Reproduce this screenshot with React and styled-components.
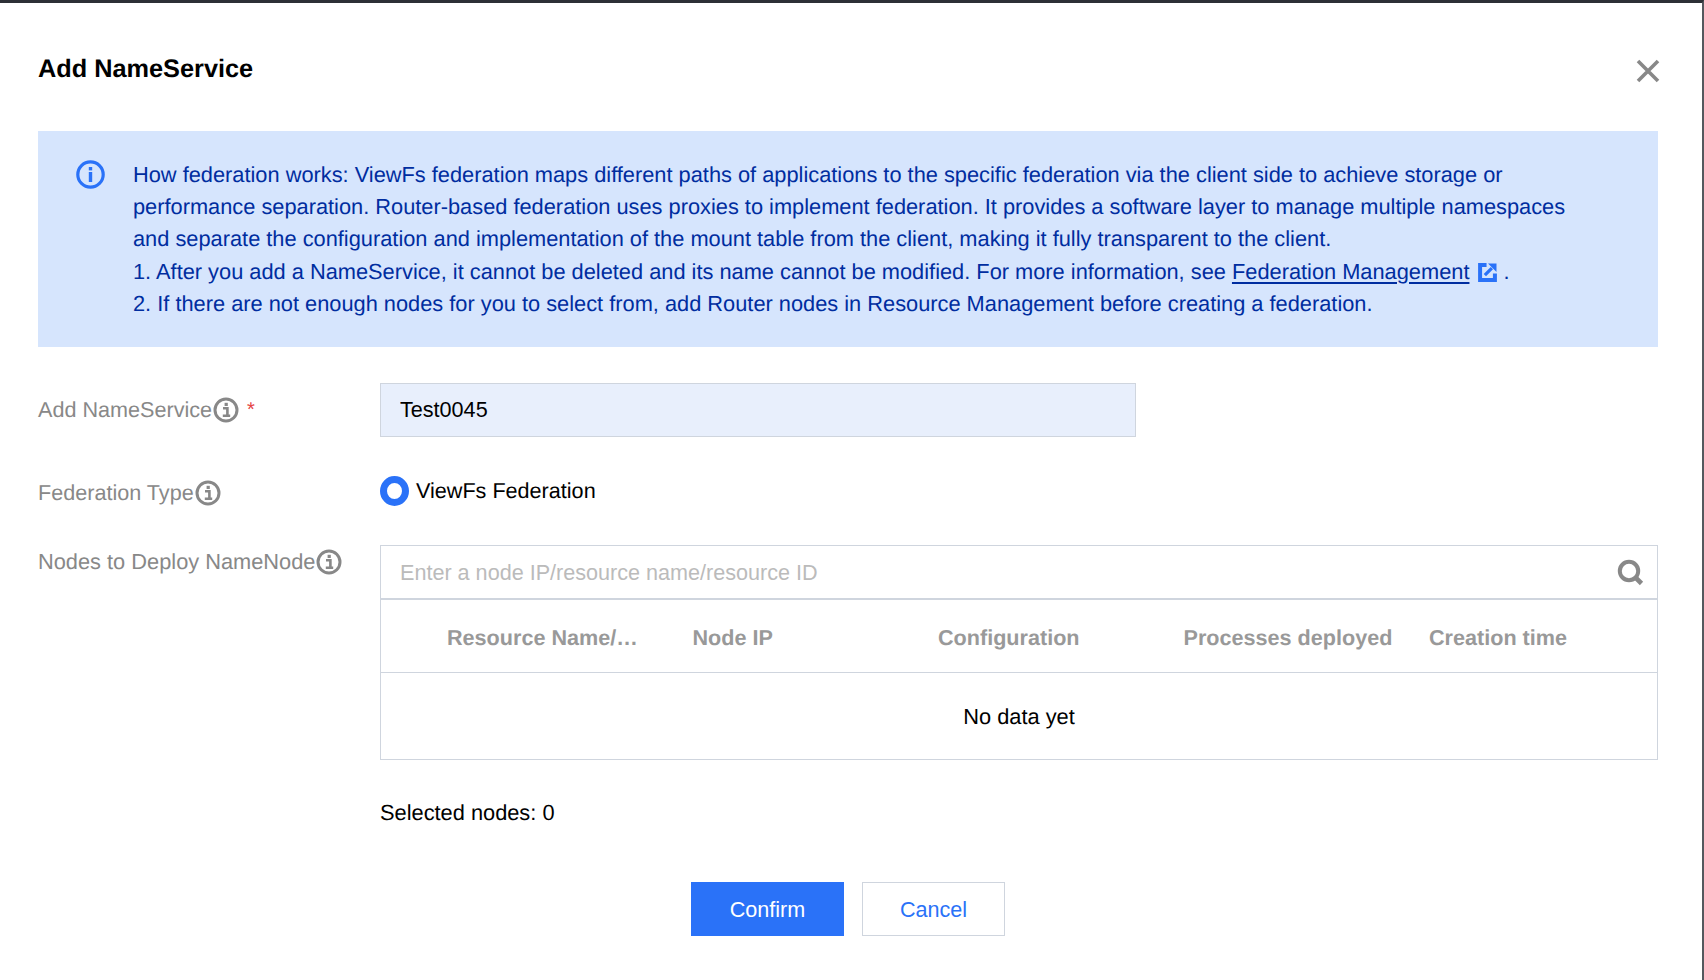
import React from 'react'
import styled, { createGlobalStyle } from 'styled-components'

const GlobalStyle = createGlobalStyle`
  html, body {
    margin: 0;
    padding: 0;
    background: #fff;
    font-family: "Liberation Sans", Arial, sans-serif;
    text-rendering: geometricPrecision;
  }
  * { box-sizing: border-box; }
`

const columns = ['Resource Name/…', 'Node IP', 'Configuration', 'Processes deployed', 'Creation time']

const InfoIcon = ({ size = 26, color = '#888' }) => (
  <svg width={size} height={size} viewBox="0 0 26 26" fill="none">
    <circle cx="13" cy="13" r="11" stroke={color} strokeWidth="3" />
    <path d="M10 11.2h4.4v7M9.8 18.8h7.4" stroke={color} strokeWidth="2.6" />
    <rect x="11.6" y="5.8" width="3.2" height="3.2" fill={color} />
  </svg>
)

const BannerIcon = () => (
  <svg width="29" height="29" viewBox="0 0 29 29" fill="none">
    <circle cx="14.5" cy="14.5" r="12.7" stroke="#2a72f8" strokeWidth="3.2" />
    <rect x="12.8" y="7" width="3.4" height="3.4" fill="#2a72f8" />
    <rect x="12.8" y="12" width="3.4" height="10" fill="#2a72f8" />
  </svg>
)

const ExternalIcon = () => (
  <svg width="19" height="19" viewBox="0 0 20 20" fill="none">
    <path d="M9 2.2H2.2v15.6h15.6V11" stroke="#2a72f8" strokeWidth="4.2" />
    <path d="M7.2 12.8 14.6 5.4" stroke="#2a72f8" strokeWidth="3.4" />
    <path d="M10.5 0.5H19.5V9.5z" fill="#2a72f8" />
  </svg>
)

const SearchIcon = () => (
  <svg width="27" height="27" viewBox="0 0 27 27" fill="none">
    <circle cx="12" cy="12" r="9.2" stroke="#888" strokeWidth="4" />
    <path d="M18.5 18.5 24.5 24.5" stroke="#888" strokeWidth="4.6" />
  </svg>
)

const CloseIcon = () => (
  <svg width="24" height="24" viewBox="0 0 24 24" fill="none">
    <path d="M2 2 22 22M22 2 2 22" stroke="#888" strokeWidth="3.6" />
  </svg>
)

export default function App() {
  return (
    <>
      <GlobalStyle />
      <Page>
        <Dialog>
          <Header>
            <Title>Add NameService</Title>
            <CloseButton><CloseIcon /></CloseButton>
          </Header>

          <Banner>
            <BannerIconWrap><BannerIcon /></BannerIconWrap>
            <BannerText>
              <p>
                How federation works: ViewFs federation maps different paths of applications to the specific federation via the client side to achieve storage or<br />
                performance separation. Router-based federation uses proxies to implement federation. It provides a software layer to manage multiple namespaces<br />
                and separate the configuration and implementation of the mount table from the client, making it fully transparent to the client.
              </p>
              <p>
                1. After you add a NameService, it cannot be deleted and its name cannot be modified. For more information, see{' '}
                <DocLink href="#">Federation Management</DocLink>
                <ExternalWrap><ExternalIcon /></ExternalWrap> .
              </p>
              <p>2. If there are not enough nodes for you to select from, add Router nodes in Resource Management before creating a federation.</p>
            </BannerText>
          </Banner>

          <FormRow $height={54} $marginTop={36}>
            <Label>
              Add NameService<InfoIcon />
              <Required>*</Required>
            </Label>
            <NameInput defaultValue="Test0045" />
          </FormRow>

          <FormRow $height={30} $marginTop={39}>
            <Label $shift={2}>
              Federation Type<InfoIcon />
            </Label>
            <RadioRow>
              <RadioDot />
              <span>ViewFs Federation</span>
            </RadioRow>
          </FormRow>

          <FormRow $marginTop={39} $top>
            <Label $shift={1} $wide>
              Nodes to Deploy NameNode<InfoIcon />
            </Label>
            <NodePicker>
              <SearchBox>
                <SearchInput placeholder="Enter a node IP/resource name/resource ID" />
                <SearchIcon />
              </SearchBox>
              <TableBox>
                <TableHead>
                  {columns.map((name) => (
                    <HeadCell key={name}>{name}</HeadCell>
                  ))}
                </TableHead>
                <EmptyRow>No data yet</EmptyRow>
              </TableBox>
              <SelectedCount>Selected nodes: 0</SelectedCount>
            </NodePicker>
          </FormRow>

          <Footer>
            <PrimaryButton>Confirm</PrimaryButton>
            <GhostButton>Cancel</GhostButton>
          </Footer>
        </Dialog>
      </Page>
    </>
  )
}

const Page = styled.div`
  width: 1704px;
  height: 980px;
  overflow: hidden;
  background: #fff;
  border-top: 3px solid #2d3036;
  border-right: 2px solid #55585e;
`

const Dialog = styled.div`
  padding: 0 44px 0 38px;
`

const Header = styled.div`
  height: 128px;
  padding-top: 50px;
  display: flex;
  justify-content: space-between;
  align-items: flex-start;
`

const Title = styled.h2`
  margin: 0;
  font-size: 25.3px;
  line-height: 32px;
  font-weight: 700;
  color: #000;
`

const CloseButton = styled.div`
  margin-top: 6px;
  margin-right: -2px;
  line-height: 0;
`

const Banner = styled.div`
  height: 216px;
  background: #d6e5fd;
  padding: 28px 30px 0 38px;
  display: flex;
  gap: 28px;
`

const BannerIconWrap = styled.div`
  padding-top: 1px;
  line-height: 0;
`

const BannerText = styled.div`
  font-size: 21.8px;
  line-height: 32.2px;
  color: #002da0;

  p { margin: 0; }
`

const DocLink = styled.a`
  color: #002da0;
  text-decoration: underline;
  text-underline-offset: 3px;
`

const ExternalWrap = styled.span`
  display: inline-block;
  margin-left: 9px;
  vertical-align: -3px;
  line-height: 0;
`

const FormRow = styled.div`
  display: flex;
  margin-top: ${(p) => p.$marginTop}px;
  align-items: ${(p) => (p.$top ? 'flex-start' : 'center')};
  ${(p) => p.$height && `height: ${p.$height}px;`}
`

const Label = styled.div`
  width: 342px;
  flex: none;
  display: flex;
  align-items: center;
  gap: 1px;
  font-size: ${(p) => (p.$wide ? '21.8px' : '21.6px')};
  line-height: 30px;
  color: #888;
  ${(p) => p.$shift && `margin-top: ${p.$shift * 2}px;`}
`

const Required = styled.span`
  color: #e54545;
  font-size: 20px;
  margin-left: 7px;
`

const NameInput = styled.input`
  width: 756px;
  height: 54px;
  padding: 0 19px;
  border: 1px solid #cfd5de;
  background: #e8effc;
  outline: none;
  font: 21.6px "Liberation Sans", Arial, sans-serif;
  color: #000;
`

const RadioRow = styled.div`
  display: flex;
  align-items: center;
  gap: 7px;
  font-size: 21.6px;
  color: #000;
`

const RadioDot = styled.span`
  width: 29px;
  height: 30px;
  border-radius: 50%;
  border: 7px solid #2a72f8;
  background: #fff;
`

const NodePicker = styled.div`
  flex: 1;
  min-width: 0;
`

const SearchBox = styled.div`
  height: 55px;
  display: flex;
  align-items: center;
  padding: 0 13px 0 19px;
  border: 1px solid #cfd5de;
  border-bottom-width: 2px;
`

const SearchInput = styled.input`
  flex: 1;
  border: 0;
  outline: none;
  padding: 2px 0 0;
  background: transparent;
  font: 21.6px "Liberation Sans", Arial, sans-serif;
  color: #000;

  &::placeholder {
    color: #bbb;
    opacity: 1;
  }
`

const TableBox = styled.div`
  border: 1px solid #cfd5de;
  border-top: 0;
`

const TableHead = styled.div`
  height: 73px;
  padding: 4px 0 0 46px;
  display: grid;
  grid-template-columns: repeat(5, 245.5px);
  align-items: center;
  border-bottom: 1px solid #cfd5de;
`

const HeadCell = styled.div`
  padding: 0 10px 0 20px;
  min-width: 0;
  white-space: nowrap;
  font-size: 21.6px;
  font-weight: 700;
  color: #999;
`

const EmptyRow = styled.div`
  height: 86px;
  padding-top: 2px;
  display: flex;
  align-items: center;
  justify-content: center;
  font-size: 21.8px;
  color: #000;
`

const SelectedCount = styled.div`
  margin-top: 38px;
  font-size: 21.8px;
  line-height: 30px;
  color: #000;
`

const Footer = styled.div`
  margin-top: 54px;
  padding-left: 653px;
  display: flex;
  gap: 18px;
`

const PrimaryButton = styled.button`
  width: 153px;
  height: 54px;
  padding: 2px 0 0;
  border: 0;
  background: #2a72f8;
  color: #fff;
  font: 21.6px "Liberation Sans", Arial, sans-serif;
`

const GhostButton = styled.button`
  width: 143px;
  height: 54px;
  padding: 2px 0 0;
  border: 1px solid #cfd5de;
  background: #fff;
  color: #2a72f8;
  font: 21.6px "Liberation Sans", Arial, sans-serif;
`
